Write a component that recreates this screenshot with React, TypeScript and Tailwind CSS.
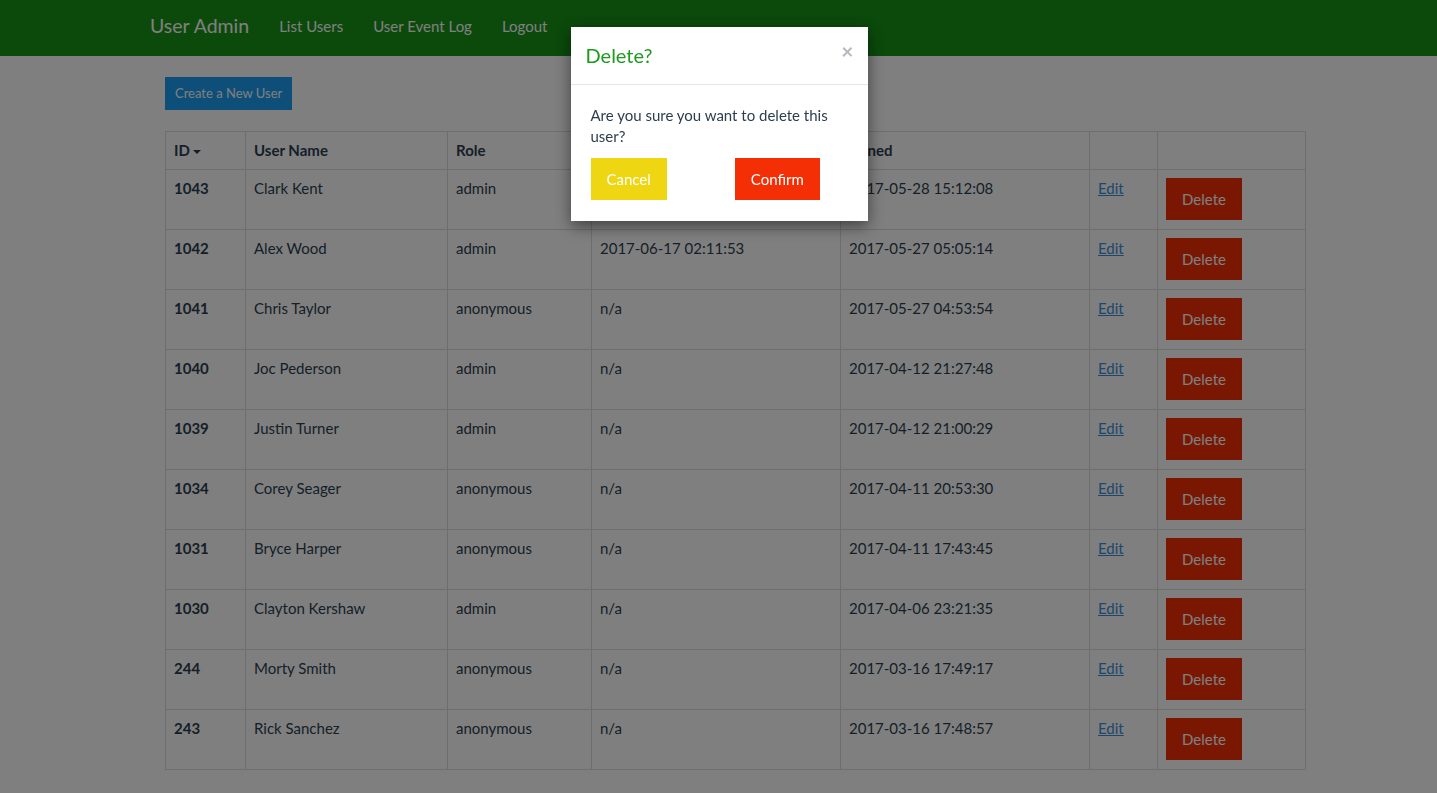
import React from 'react';

interface UserRow {
  id: number;
  name: string;
  role: string;
  lastLogin: string;
  joined: string;
}

const users: UserRow[] = [
  { id: 1043, name: 'Clark Kent', role: 'admin', lastLogin: '2017-06-18 10:42:17', joined: '2017-05-28 15:12:08' },
  { id: 1042, name: 'Alex Wood', role: 'admin', lastLogin: '2017-06-17 02:11:53', joined: '2017-05-27 05:05:14' },
  { id: 1041, name: 'Chris Taylor', role: 'anonymous', lastLogin: 'n/a', joined: '2017-05-27 04:53:54' },
  { id: 1040, name: 'Joc Pederson', role: 'admin', lastLogin: 'n/a', joined: '2017-04-12 21:27:48' },
  { id: 1039, name: 'Justin Turner', role: 'admin', lastLogin: 'n/a', joined: '2017-04-12 21:00:29' },
  { id: 1034, name: 'Corey Seager', role: 'anonymous', lastLogin: 'n/a', joined: '2017-04-11 20:53:30' },
  { id: 1031, name: 'Bryce Harper', role: 'anonymous', lastLogin: 'n/a', joined: '2017-04-11 17:43:45' },
  { id: 1030, name: 'Clayton Kershaw', role: 'admin', lastLogin: 'n/a', joined: '2017-04-06 23:21:35' },
  { id: 244, name: 'Morty Smith', role: 'anonymous', lastLogin: 'n/a', joined: '2017-03-16 17:49:17' },
  { id: 243, name: 'Rick Sanchez', role: 'anonymous', lastLogin: 'n/a', joined: '2017-03-16 17:48:57' },
];

const cell = 'border border-[#dddddd] p-[8px] align-top text-left';

// Navbar
const Navbar: React.FC = () => (
  <nav className="h-[56px] bg-[#169416] flex items-center pl-[150px] pb-[4px]">
    <span className="text-[19.5px] text-white mr-[15px]">User Admin</span>
    {['List Users', 'User Event Log', 'Logout'].map((label) => (
      <a key={label} href="#" className="px-[15px] text-[15px] text-white">
        {label}
      </a>
    ))}
  </nav>
);

// Users table
const UsersTable: React.FC = () => (
  <table className="table-fixed w-[1140px] border-collapse text-[15px] leading-[21px] text-[#2c3e50]">
    <colgroup>
      <col className="w-[80px]" />
      <col className="w-[202px]" />
      <col className="w-[144px]" />
      <col className="w-[249px]" />
      <col className="w-[249px]" />
      <col className="w-[68px]" />
      <col className="w-[148px]" />
    </colgroup>
    <thead>
      <tr>
        <th className={cell + ' font-bold'}>
          <span className="inline-flex items-center">
            ID
            <span className="ml-[3px] mt-[3px] inline-block w-0 h-0 border-l-[4px] border-r-[4px] border-t-[4px] border-l-transparent border-r-transparent border-t-[#2c3e50]" />
          </span>
        </th>
        <th className={cell + ' font-bold'}>User Name</th>
        <th className={cell + ' font-bold'}>Role</th>
        <th className={cell + ' font-bold'}>Last Login</th>
        <th className={cell + ' font-bold'}>Joined</th>
        <th className={cell} />
        <th className={cell} />
      </tr>
    </thead>
    <tbody>
      {users.map((u) => (
        <tr key={u.id}>
          <th className={cell + ' font-bold'}>{u.id}</th>
          <td className={cell}>{u.name}</td>
          <td className={cell}>{u.role}</td>
          <td className={cell}>{u.lastLogin}</td>
          <td className={cell}>{u.joined}</td>
          <td className={cell}>
            <a href="#" className="underline text-[#3a8fd9]">Edit</a>
          </td>
          <td className={cell}>
            <button className="h-[42px] mb-[1px] px-[16px] bg-[#f52f05] text-white text-[15px] block">Delete</button>
          </td>
        </tr>
      ))}
    </tbody>
  </table>
);

// Confirm modal
const DeleteModal: React.FC = () => (
  <div className="fixed inset-0 bg-black/50 flex justify-center">
    <div className="mt-[27px] ml-[1px] w-[297px] h-fit bg-white shadow-[0_5px_15px_rgba(0,0,0,0.5)]">
      <div className="flex items-start justify-between border-b border-[#e5e5e5] px-[15px] py-[15px]">
        <h4 className="text-[20px] leading-[27px] text-[#1e9a1e]">Delete?</h4>
        <button className="text-[21px] leading-none font-bold text-[#b4b9bf] -mt-[2px] -mr-[1px]">×</button>
      </div>
      <div className="p-[20px] pb-[21px] text-[15px] leading-[21px] text-[#2c3e50]">
        <p className="mb-[11px]">Are you sure you want to delete this user?</p>
        <div className="flex">
          <button className="h-[42px] px-[16px] bg-[#efd613] text-white">Cancel</button>
          <button className="h-[42px] px-[16px] ml-[68px] bg-[#f52f05] text-white">Confirm</button>
        </div>
      </div>
    </div>
  </div>
);

export default function App() {
  return (
    <div className="min-h-[793px] bg-white font-['Lato','Liberation_Sans',sans-serif]">
      <Navbar />
      <main className="pl-[165px] pt-[21px] pb-[24px]">
        <button className="h-[33px] px-[10px] bg-[#1a9ef0] text-white text-[13px]">Create a New User</button>
        <div className="mt-[21px]">
          <UsersTable />
        </div>
      </main>
      <DeleteModal />
    </div>
  );
}
